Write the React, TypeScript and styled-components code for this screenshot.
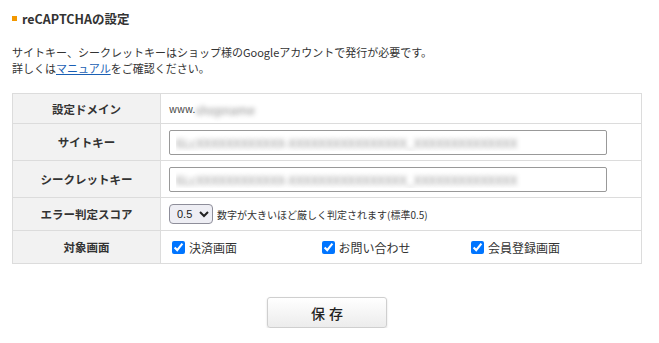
import React, { useState } from 'react';
import styled, { createGlobalStyle } from 'styled-components';

const GlobalStyle = createGlobalStyle`
  html, body {
    margin: 0;
    padding: 0;
    background: #fff;
  }
  body {
    font-family: "Noto Sans CJK JP", "Noto Sans", sans-serif;
    color: #333;
  }
`;

const Page = styled.div`
  width: 630px;
  padding: 10px 0 0 12px;
`;

const Heading = styled.h2`
  display: flex;
  align-items: center;
  gap: 5px;
  margin: 0;
  height: 16px;
  font-size: 12.5px;
  font-weight: bold;
  color: #333;

  &::before {
    content: '';
    width: 5px;
    height: 5px;
    background: #f39800;
  }
`;

const Description = styled.p`
  margin: 18px 0 0;
  font-size: 11px;
  line-height: 16px;
  color: #333;

  a {
    color: #1a5fb4;
    text-decoration: underline;
  }
`;

const SettingsTable = styled.table`
  width: 630px;
  margin-top: 17px;
  border-collapse: collapse;
  font-size: 11.5px;
`;

const Row = styled.tr<{ height: number }>`
  height: ${p => p.height}px;
`;

const LabelCell = styled.th`
  width: 147px;
  padding: 0;
  background: #f2f2f2;
  border: 1px solid #dcdcdc;
  font-weight: bold;
  color: #333;
  text-align: center;
`;

const ValueCell = styled.td`
  padding: 0 0 0 8px;
  border: 1px solid #dcdcdc;
  color: #333;
`;

const Blurred = styled.span`
  display: inline-block;
  font-size: 12px;
  color: transparent;
  text-shadow: 0 0 5px rgba(0, 0, 0, 0.45);
  white-space: nowrap;
  vertical-align: middle;
`;

const Domain = styled.span`
  font-size: 10px;
  color: #444;
  vertical-align: middle;
`;

const KeyInput = styled.input`
  box-sizing: border-box;
  display: block;
  width: 438px;
  height: 25px;
  padding: 0 6px;
  border: 1px solid #999;
  border-radius: 2px;
  font-family: inherit;
  font-size: 12px;
  letter-spacing: 0.5px;
  color: transparent;
  text-shadow: 0 0 5px rgba(0, 0, 0, 0.45);
  background: #fff;
`;

const ScoreLine = styled.div`
  display: flex;
  align-items: center;
  gap: 4px;
`;

const ScoreSelect = styled.select`
  width: 44px;
  height: 20px;
  padding: 0 0 0 3px;
  border: 1px solid #8e8e9a;
  border-radius: 4px;
  background: #eeeef4;
  font-family: "Liberation Sans", sans-serif;
  font-size: 11px;
  color: #222;
`;

const Hint = styled.span`
  font-size: 10px;
  color: #333;
`;

const CheckGroup = styled.div`
  display: flex;
  padding-left: 3px;
`;

const CheckItem = styled.label`
  display: flex;
  align-items: center;
  gap: 4px;
  width: 149.5px;
  font-size: 12px;
  color: #333;

  input {
    margin: 0;
    width: 13px;
    height: 13px;
    accent-color: #0075ff;
  }
`;

const Actions = styled.div`
  display: flex;
  justify-content: center;
  margin-top: 33px;
`;

const SaveButton = styled.button`
  width: 120px;
  height: 31px;
  padding: 0 0 0 4px;
  border: 1px solid #cfcfcf;
  border-radius: 3px;
  background: linear-gradient(#ffffff, #ececec);
  box-shadow: 0 1px 2px rgba(0, 0, 0, 0.15);
  font-family: inherit;
  font-size: 14px;
  font-weight: 500;
  letter-spacing: 4px;
  color: #222;
  cursor: pointer;
`;

const targets = ['決済画面', 'お問い合わせ', '会員登録画面'];
const dummyKey = '6LcXXXXXXXXXXXX-XXXXXXXXXXXXXXXX_XXXXXXXXXXXXXX';

export default function App() {
  const [score, setScore] = useState('0.5');
  const [checked, setChecked] = useState<boolean[]>([true, true, true]);

  return (
    <Page>
      <GlobalStyle />
      <Heading>reCAPTCHAの設定</Heading>
      <Description>
        サイトキー、シークレットキーはショップ様のGoogleアカウントで発行が必要です。
        <br />
        詳しくは<a href="#">マニュアル</a>をご確認ください。
      </Description>

      <SettingsTable>
        <tbody>
          <Row height={30}>
            <LabelCell>設定ドメイン</LabelCell>
            <ValueCell>
              <Domain>www.</Domain>
              <Blurred>shopname</Blurred>
            </ValueCell>
          </Row>
          <Row height={37}>
            <LabelCell>サイトキー</LabelCell>
            <ValueCell>
              <KeyInput readOnly value={dummyKey} />
            </ValueCell>
          </Row>
          <Row height={37}>
            <LabelCell>シークレットキー</LabelCell>
            <ValueCell>
              <KeyInput readOnly value={dummyKey} />
            </ValueCell>
          </Row>
          <Row height={33}>
            <LabelCell>エラー判定スコア</LabelCell>
            <ValueCell>
              <ScoreLine>
                <ScoreSelect value={score} onChange={e => setScore(e.target.value)}>
                  {['0.1', '0.3', '0.5', '0.7', '0.9'].map(v => (
                    <option key={v} value={v}>{v}</option>
                  ))}
                </ScoreSelect>
                <Hint>数字が大きいほど厳しく判定されます(標準0.5)</Hint>
              </ScoreLine>
            </ValueCell>
          </Row>
          <Row height={33}>
            <LabelCell>対象画面</LabelCell>
            <ValueCell>
              <CheckGroup>
                {targets.map((t, i) => (
                  <CheckItem key={t}>
                    <input
                      type="checkbox"
                      checked={checked[i]}
                      onChange={() =>
                        setChecked(prev => prev.map((c, j) => (j === i ? !c : c)))
                      }
                    />
                    {t}
                  </CheckItem>
                ))}
              </CheckGroup>
            </ValueCell>
          </Row>
        </tbody>
      </SettingsTable>

      <Actions>
        <SaveButton>保存</SaveButton>
      </Actions>
    </Page>
  );
}
